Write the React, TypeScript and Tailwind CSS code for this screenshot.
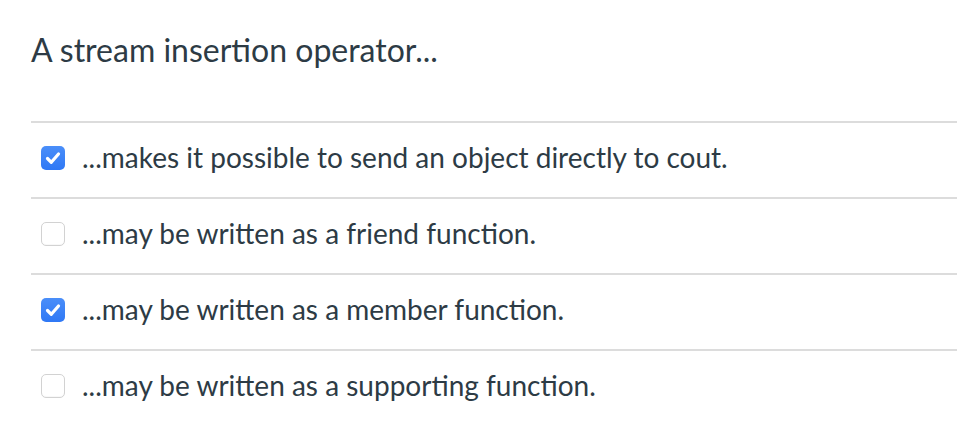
export default function App() {
  const opts = [
    { t: "...makes it possible to send an object directly to cout.", c: true },
    { t: "...may be written as a friend function.", c: false },
    { t: "...may be written as a member function.", c: true },
    { t: "...may be written as a supporting function.", c: false },
  ];
  return (
    <div className="w-[957px] h-[433px] bg-white pl-[31px] text-[#2d3b45]" style={{ fontFamily: "Lato, sans-serif" }}>
      <div className="pt-[28px] h-[121px] text-[32px] leading-[44px]">A stream insertion operator...</div>
      {opts.map((o, i) => (
        <div key={i} className="border-t-[2px] border-[#dcdcdc] h-[76px] flex items-center gap-[17px] pl-[10px] pb-[4px]">
          {o.c ? (
            <div className="w-[24px] h-[24px] rounded-[5px] bg-gradient-to-b from-[#4a8ef9] to-[#2f78f5] flex items-center justify-center">
              <svg width="20" height="20" viewBox="0 0 20 20"><path d="M4.5 10.5l3.8 3.8L15.5 6" stroke="white" strokeWidth="3.2" fill="none" strokeLinecap="round" strokeLinejoin="round" /></svg>
            </div>
          ) : (
            <div className="w-[24px] h-[24px] rounded-[5px] border border-[#d2d2d2] bg-white shadow-[inset_0_-1px_1px_rgba(0,0,0,0.03)]" />
          )}
          <span className="text-[28px] leading-[34px] mb-[2px]">{o.t}</span>
        </div>
      ))}
    </div>
  );
}
